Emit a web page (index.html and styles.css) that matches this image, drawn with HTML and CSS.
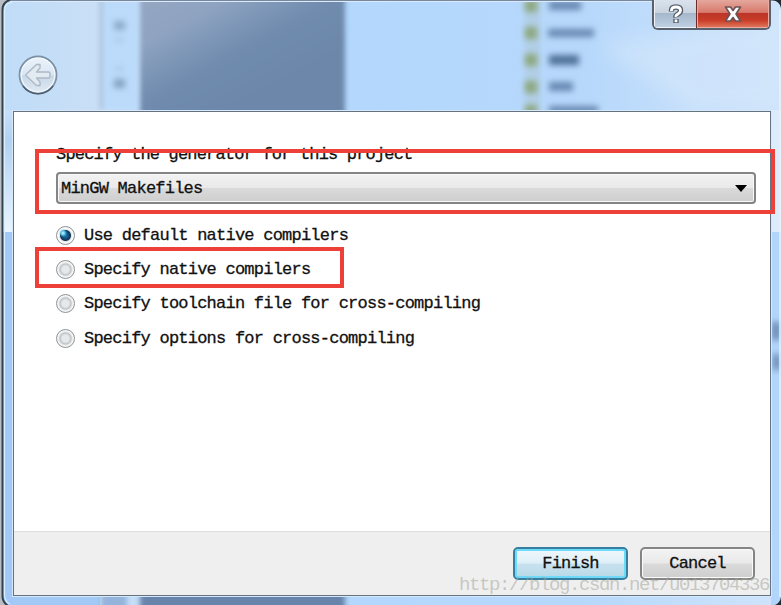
FILE: index.html
```html
<!DOCTYPE html>
<html lang="en">
<head>
<meta charset="utf-8">
<title>Project generator</title>
<link rel="stylesheet" href="styles.css">
</head>
<body>
<div class="window">
  <svg class="glass" width="781" height="605" viewBox="0 0 781 605" aria-hidden="true">
    <defs>
      <linearGradient id="base" x1="0" x2="1" y1="0" y2="0">
        <stop offset="0" stop-color="#bfdcf8"/><stop offset=".12" stop-color="#c9dff6"/>
        <stop offset=".45" stop-color="#b3d7fd"/><stop offset=".75" stop-color="#b7d8fb"/>
        <stop offset="1" stop-color="#cfe4fb"/>
      </linearGradient>
      <linearGradient id="shade" gradientUnits="userSpaceOnUse" x1="150" y1="0" x2="215" y2="120">
        <stop offset="0" stop-color="#93a6c2"/><stop offset=".25" stop-color="#8fa4c1"/>
        <stop offset=".65" stop-color="#6f8bae"/><stop offset="1" stop-color="#6c87a9"/>
      </linearGradient>
      <linearGradient id="side" x1="0" x2="0" y1="0" y2="1">
        <stop offset="0" stop-color="#c8e0fa"/><stop offset=".25" stop-color="#b2d1f3"/>
        <stop offset="1" stop-color="#eaf5ff"/>
      </linearGradient>
      <filter id="b2" filterUnits="userSpaceOnUse" x="0" y="-20" width="800" height="660"><feGaussianBlur stdDeviation="2.6"/></filter>
      <filter id="b3" filterUnits="userSpaceOnUse" x="0" y="-20" width="800" height="660"><feGaussianBlur stdDeviation="3.3"/></filter>
      <filter id="b4" filterUnits="userSpaceOnUse" x="500" y="0" width="281" height="140"><feGaussianBlur stdDeviation="9"/></filter>
    </defs>
    <rect width="781" height="605" fill="url(#base)"/>
    <rect x="0" y="110" width="14" height="122" fill="url(#side)"/>
    <rect x="0" y="232" width="14" height="373" fill="#a1c8f6"/>
    <rect x="14" y="596" width="86" height="9" fill="#a3caf7"/>
    <rect x="771" y="110" width="10" height="122" fill="#dcecfc"/>
    <rect x="771" y="232" width="10" height="373" fill="#b2d5fc"/>
    <path d="M600 45 781 20V110H690Z" fill="#d4e7fb" opacity=".6" filter="url(#b4)"/>
    <g filter="url(#b2)">
      <rect x="100" y="-10" width="3" height="120" fill="#a3bcd6"/>
      <rect x="104" y="-10" width="34" height="120" fill="#bcdbfb"/>
      <rect x="140" y="-15" width="205" height="140" fill="url(#shade)"/>
      <rect x="140" y="585" width="205" height="35" fill="#6984aa"/>
      <rect x="101" y="590" width="26" height="30" fill="#94b4dc"/>
      <rect x="525" y="-8" width="15" height="130" fill="#b1cee6"/>
    </g>
    <g filter="url(#b3)">
      <rect x="114" y="21" width="11" height="9" fill="#89a7c8"/>
      <rect x="114" y="79" width="11" height="9" fill="#809fc0"/>
      <rect x="115" y="39" width="9" height="3" fill="#a0bfe0"/>
      <rect x="115" y="67" width="9" height="3" fill="#a0bfe0"/>
      <g fill="#8ca77c">
        <rect x="525" y="0" width="12" height="12"/><rect x="525" y="27" width="12" height="12"/>
        <rect x="525" y="54" width="12" height="12"/><rect x="525" y="81" width="12" height="12"/>
        <rect x="525" y="105" width="12" height="12"/>
      </g>
      <g fill="#6687b0">
        <rect x="549" y="1" width="32" height="9"/><rect x="548" y="29" width="46" height="8"/>
        <rect x="549" y="55" width="30" height="10" fill="#4f7098"/><rect x="549" y="82" width="24" height="9"/>
        <rect x="549" y="106" width="49" height="8"/>
        <rect x="772" y="322" width="8" height="18"/><rect x="773" y="354" width="7" height="16"/>
      </g>
    </g>
    <path d="M0 0H781V2H0Z" fill="#dceafb"/>
    <path d="M0 0H781" stroke="#53677f" stroke-width="1.5"/>
    <path d="M0 0H2V605H0Z" fill="#c4c9ce"/>
    <path d="M0 0H9Q3 2 3 9V596Q3 602 8 605H0Z" fill="#b9bec5"/>
    <path d="M10 0Q2.500 2 2.500 10V596Q2.500 602 8 606" fill="none" stroke="#34424f" stroke-width="2"/>
    <path d="M12 2.500Q4.500 3 4.500 11V595Q5 602 10 604" fill="none" stroke="#d9f0fb" stroke-width="1.200"/>
    <path d="M773 0Q780 2 781 8V0ZM781 597Q780 603 775 605H781Z" fill="#222b31"/>
    <path d="M780 10V597" stroke="#e7f3fb" stroke-width="1.500"/>
  </svg>

  <header class="titlebar">
    <button class="back" aria-label="Back">
      <svg width="40" height="40" viewBox="0 0 40 40">
        <defs><linearGradient id="disc" x1="0" x2="0" y1="0" y2="1">
          <stop offset="0" stop-color="#edf4fb"/><stop offset=".5" stop-color="#d8e6f4"/>
          <stop offset=".52" stop-color="#c9d8e8"/><stop offset="1" stop-color="#dfebf5"/>
        </linearGradient></defs>
        <circle cx="20" cy="20" r="18.500" fill="url(#disc)" stroke="#7c91a6" stroke-width="1.800"/>
        <path d="M5 31A18.500 18.500 0 0 0 35 31" fill="none" stroke="#4d5f71" stroke-width="1.500"/>
        <circle cx="20" cy="20" r="16.800" fill="none" stroke="#f2f8fd" stroke-width="1.200"/>
        <path d="M7.500 20 18.500 9.500H22V13L18.500 17H30.500Q32 17 32 18.500V21.500Q32 23 30.500 23H18.500L22 27V30.500H18.500Z" fill="#e2eaf2" stroke="#adb9c5" stroke-width="1.400" stroke-linejoin="round"/>
      </svg>
    </button>
    <div class="caption">
      <button class="help" aria-label="Help">
        <svg width="18" height="22" viewBox="0 0 18 22" fill="none">
          <path d="M4.500 8.500V7.500Q4.500 4 9 4T13.500 7.500Q13.500 9.500 11 11T9 14.500M9 16V20" stroke="#535c68" stroke-width="5.400"/>
          <path d="M4.500 8V7.500Q4.500 4 9 4T13.500 7.500Q13.500 9.500 11 11T9 14M9 16.500V19.200" stroke="#fff" stroke-width="2.800"/>
        </svg>
      </button>
      <button class="close" aria-label="Close">
        <svg width="18" height="18" viewBox="0 0 18 18">
          <path d="M1.500 2H6.500L9 5.500 11.500 2H16.500L12 9 16.500 16H11.500L9 12.500 6.500 16H1.500L6 9Z" fill="#fff" stroke="#6a5356" stroke-width="1.600" stroke-linejoin="round"/>
        </svg>
      </button>
    </div>
  </header>

  <main class="client">
    <section class="page">
      <label class="prompt">Specify the generator for this project</label>
      <div class="combo"><span>MinGW Makefiles</span><i class="arrow"></i></div>
      <div class="options">
        <label class="option"><i class="radio checked"></i>Use default native compilers</label>
        <label class="option"><i class="radio"></i>Specify native compilers</label>
        <label class="option"><i class="radio"></i>Specify toolchain file for cross-compiling</label>
        <label class="option"><i class="radio"></i>Specify options for cross-compiling</label>
      </div>
    </section>
    <footer class="actions">
      <button class="btn primary">Finish</button>
      <button class="btn">Cancel</button>
    </footer>
  </main>

  <div class="mark mark-generator"></div>
  <div class="mark mark-native"></div>
  <div class="watermark">http://blog.csdn.net/u013704336</div>
</div>
</body>
</html>
```
FILE: styles.css
```css
* { box-sizing: border-box; }

body {
  margin: 0;
  overflow: hidden;
  font-family: "Liberation Mono", monospace;
  font-size: 17px;
  letter-spacing: -0.77px;
  color: #111;
}

button {
  margin: 0;
  padding: 0;
  font: inherit;
  letter-spacing: inherit;
  color: inherit;
}

svg { display: block; }

.window {
  position: relative;
  width: 781px;
  height: 605px;
  padding: 0 10px 9px 13px;
  display: flex;
  flex-direction: column;
}

.glass {
  position: absolute;
  inset: 0;
}

.titlebar {
  position: relative;
  flex: 0 0 111px;
  display: flex;
  justify-content: space-between;
  align-items: flex-start;
}

.back {
  margin: 55px 0 0 5px;
  border: 0;
  background: none;
}

.caption {
  display: flex;
  width: 119px;
  height: 30px;
  border: 2px solid #59616c;
  border-top: 0;
  border-radius: 0 0 6px 6px;
  overflow: hidden;
}

.help, .close {
  display: flex;
  align-items: center;
  justify-content: center;
  border: 1px solid #edf3f9;
  border-top: 0;
}

.help {
  width: 43px;
  background: linear-gradient(#d9e2ec, #c8d3df 48%, #a5b7cb 50%, #bfd0e2);
}

.close {
  flex: 1;
  border-color: #edaaa0;
  box-shadow: -1px 0 #6b2b2a;
  background: linear-gradient(#e5a79c, #d77a6c 46%, #bb3527 50%, #c93c28 75%, #df7459);
}

.client {
  position: relative;
  flex: 1;
  display: flex;
  flex-direction: column;
  border: 1px solid #65727f;
  outline: 1px solid #d5e9fa;
  background: #fff;
}

.page {
  flex: 1;
  padding: 32px 14px 0 42px;
}

.prompt {
  display: block;
  height: 28px;
  line-height: 21px;
  letter-spacing: -0.82px;
}

.prompt, .combo, .option, .btn { -webkit-text-stroke: 0.3px #111; }

.combo {
  display: flex;
  align-items: center;
  justify-content: space-between;
  height: 32px;
  padding: 0 7px 0 3px;
  border: 2px solid #858585;
  border-radius: 4px;
  box-shadow: inset 0 0 0 1px #f8f8f8;
  background: linear-gradient(#f2f2f2, #e9e9e9 49%, #dadada 51%, #cecece);
}

.arrow {
  border: 6px solid transparent;
  border-top: 7px solid #000;
  border-bottom: 0;
}

.options { padding-top: 14px; }

.option {
  display: flex;
  align-items: center;
  height: 34.3px;
  gap: 9px;
}

.radio {
  width: 19px;
  height: 19px;
  border: 1.5px solid #8d9295;
  border-radius: 50%;
  background: radial-gradient(circle, #e6e8e9 0 3.5px, #bfc4c7 5.5px, #e0e2e3 6.5px, #f6f6f6 7.5px);
}

.checked {
  background: radial-gradient(circle at 6px 6px, #d2f6ff 0, #58c4e8 2px, transparent 4px),
    radial-gradient(circle, #167caf 0, #123e69 4.2px, #173653 5px, #dde6eb 6px, #f9f9f9 7px);
}

.actions {
  display: flex;
  flex: 0 0 64px;
  justify-content: flex-end;
  gap: 12px;
  padding: 15px 15px 0 0;
  border-top: 1px solid #dedede;
  background: #efefef;
}

.btn {
  width: 115px;
  height: 33px;
  border: 2px solid #858585;
  border-radius: 5px;
  box-shadow: inset 0 0 0 1px #fafafa;
  background: linear-gradient(#f3f3f3, #e9e9e9 49%, #dadada 51%, #cecece);
}

.primary {
  border-color: #377f9e;
  box-shadow: inset 0 0 0 2px #6fd9fa;
  background: linear-gradient(#eff8fc, #dfeff7 49%, #c8e1ee 51%, #b8d9e8);
}

.mark {
  position: absolute;
  border: 4px solid #ed4039;
}

.mark-generator {
  left: 35px;
  top: 149px;
  width: 740px;
  height: 65px;
}

.mark-native {
  left: 35px;
  top: 247px;
  width: 309px;
  height: 41px;
}

.watermark {
  position: absolute;
  left: 459px;
  top: 573px;
  font-size: 19px;
  line-height: 24px;
  letter-spacing: -1.4px;
  color: rgba(165, 165, 155, 0.55);
}
```
